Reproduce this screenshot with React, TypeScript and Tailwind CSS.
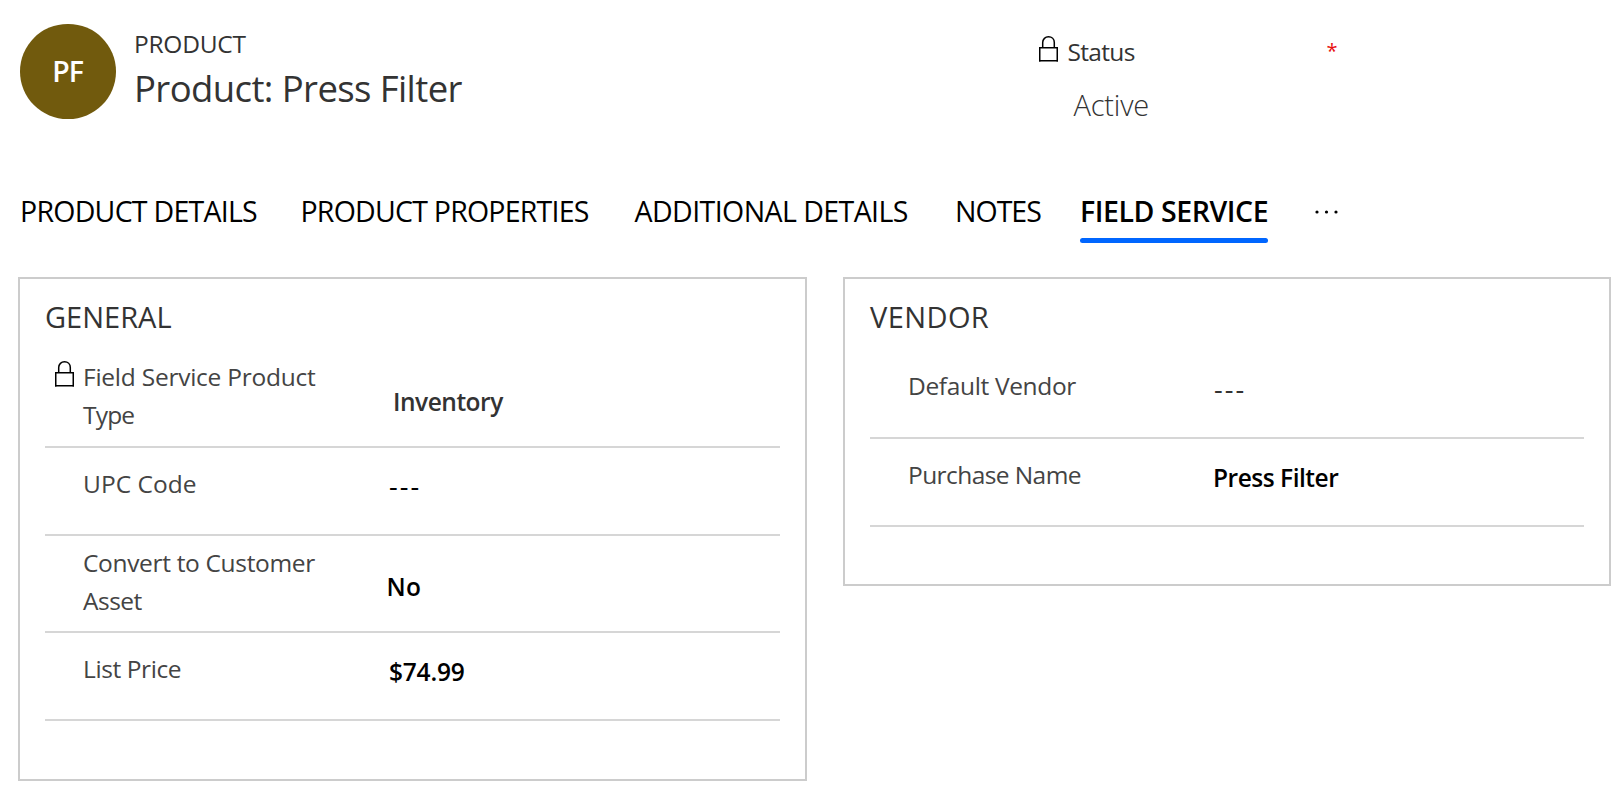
import type { ReactNode } from 'react';

function LockIcon({ className = '' }: { className?: string }) {
  return (
    <svg viewBox="0 0 20 26" width="20" height="26" fill="none" stroke="#000" strokeWidth="1.5" className={className}>
      <path d="M0 11.75H19M0 24.75H19" />
      <path d="M0.75 11V25.5M18.25 11V25.5" />
      <path d="M3.7 11.5V6.6C3.7 3 6.3 0.8 9.5 0.8S15.3 3 15.3 6.6V11.5" />
    </svg>
  );
}

function MoreIcon() {
  return (
    <svg viewBox="0 0 24 4" width="24" height="4" fill="#000">
      <circle cx="2" cy="2" r="1.6" />
      <circle cx="11.5" cy="2" r="1.6" />
      <circle cx="21" cy="2" r="1.6" />
    </svg>
  );
}

function Card({ title, className, children }: { title: ReactNode; className: string; children: ReactNode }) {
  return (
    <section className={`border-2 border-[#cccccc] px-[25px] pt-[18px] ${className}`}>
      <h2 className="h-[59px] text-[29px] leading-10 text-[#333]">{title}</h2>
      {children}
    </section>
  );
}

function Row({ className, label, value }: { className: string; label: ReactNode; value: ReactNode }) {
  return (
    <div className={`grid grid-cols-[344px_1fr] border-b-2 border-[#d6d6d6] text-[24.5px] leading-[38px] ${className}`}>
      <div className="pl-[38px] text-[#444]">{label}</div>
      <div>{value}</div>
    </div>
  );
}

export default function App() {
  return (
    <main className="h-[807px] w-[1623px] overflow-hidden bg-white font-['Open_Sans','Noto_Sans',sans-serif] text-black whitespace-nowrap">
      <header className="flex h-[191px] pl-5">
        <div className="mt-6 flex h-[95px] w-24 items-center justify-center rounded-full bg-[#715a0d] pr-px text-[28.5px] font-semibold tracking-[-1.2px] text-white">
          PF
        </div>
        <div className="ml-[17px] w-[906px] pt-7 text-[#333]">
          <div className="pl-px text-[24.5px] leading-8 tracking-[-0.25px]">PRODUCT</div>
          <h1 className="mt-[3px] pl-px text-[36.5px] leading-[50px] tracking-[-0.6px]">Product: Press Filter</h1>
        </div>
        <div className="w-[300px] pt-[33px] text-[#333]">
          <div className="flex h-[52px] items-start text-[24.5px] leading-[38px]">
            <LockIcon className="mt-[3px]" />
            <span className="ml-[8.5px] w-[259px] tracking-[-0.68px]">Status</span>
            <span className="-mt-px text-[20px] text-[#e81010]">*</span>
          </div>
          <div className="pl-[34.5px] text-[29px] font-light leading-10 tracking-[-0.2px]">Active</div>
        </div>
      </header>

      <nav className="grid h-[86px] grid-cols-[280.5px_334px_320.5px_125px_188px_1fr] pl-5 text-[28.5px] leading-10">
        <span className="tracking-[-0.74px]">PRODUCT DETAILS</span>
        <span className="tracking-[-0.77px]">PRODUCT PROPERTIES</span>
        <span className="tracking-[-0.57px]">ADDITIONAL DETAILS</span>
        <span className="tracking-[-1px]">NOTES</span>
        <span className="flex flex-col">
          <span className="font-semibold tracking-[-0.43px]">FIELD SERVICE</span>
          <span className="mt-[7px] h-[5px] rounded-full bg-[#0066ff]" />
        </span>
        <span className="pl-[47px] pt-[19px]">
          <MoreIcon />
        </span>
      </nav>

      <div className="flex items-start gap-9 pl-[18px]">
        <Card title="GENERAL" className="h-[504px] w-[789px]">
          <Row
            className="h-[92px] pt-[2px]"
            label={
              <div className="flex items-start">
                <LockIcon className="-ml-7 mr-2 mt-[3px]" />
                <div>
                  <div className="tracking-[-0.24px]">Field Service Product</div>
                  <div className="tracking-[-0.8px]">Type</div>
                </div>
              </div>
            }
            value={<div className="pl-1 pt-[25px] font-semibold tracking-[-0.48px] text-[#333]">Inventory</div>}
          />
          <Row
            className="h-[88px] pt-[17px]"
            label={<div className="tracking-[0.02px]">UPC Code</div>}
            value={<div className="pt-0.5 text-[27px] tracking-[2px]">---</div>}
          />
          <Row
            className="h-[97px] pt-2"
            label={
              <>
                <div className="tracking-[-0.33px]">Convert to Customer</div>
                <div className="tracking-[-0.5px]">Asset</div>
              </>
            }
            value={<div className="-ml-[2.5px] pt-6 font-semibold tracking-[0.4px]">No</div>}
          />
          <Row
            className="h-[88px] pt-[17px]"
            label={<div className="tracking-[-0.4px]">List Price</div>}
            value={<div className="pt-[3px] font-semibold tracking-[-0.2px]">$74.99</div>}
          />
        </Card>

        <Card title={<span className="tracking-[0.4px]">VENDOR</span>} className="h-[309px] w-[768px]">
          <Row
            className="h-[83px] pt-[11px]"
            label={<div className="tracking-[-0.35px]">Default Vendor</div>}
            value={<div className="pt-[3px] text-[27px] tracking-[2px] text-[#333]">---</div>}
          />
          <Row
            className="h-[88px] pt-[17px]"
            label={<div className="tracking-[-0.58px]">Purchase Name</div>}
            value={<div className="-ml-px pt-[3px] font-semibold tracking-[-0.48px]">Press Filter</div>}
          />
        </Card>
      </div>
    </main>
  );
}
